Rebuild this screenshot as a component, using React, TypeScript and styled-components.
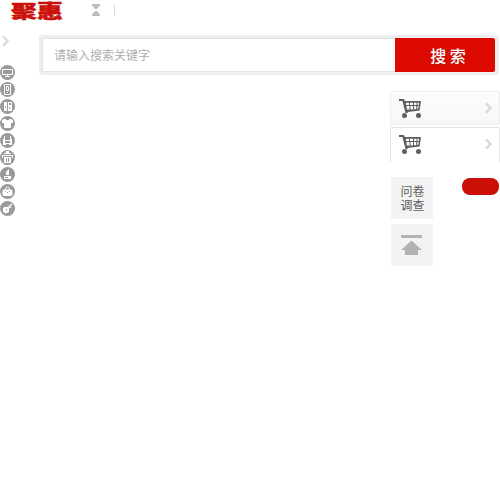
import React from "react";
import styled, { createGlobalStyle } from "styled-components";

const Global = createGlobalStyle`
  * { box-sizing: border-box; }
  body { margin: 0; background: #fff; overflow: hidden; font-family: "Liberation Sans", "Noto Sans CJK SC", sans-serif; }
  svg { display: block; flex: none; }
`;

const Page = styled.div`
  width: 500px;
  height: 500px;
  overflow: hidden;
`;
const Header = styled.header`
  display: flex;
  align-items: flex-start;
  height: 35px;
  padding-left: 11px;
`;
const Logo = styled.div`
  width: 81px;
  height: 20px;
  font: 900 26px/20px "Noto Sans CJK SC", sans-serif;
  color: #cb110a;
  white-space: nowrap;
  -webkit-text-stroke: 0.6px #cb110a;
  transform: scaleY(0.72);
  transform-origin: 0 45%;
`;
const Divider = styled.span`
  width: 1px;
  height: 12px;
  margin: 4px 0 0 13px;
  background: #ddd;
`;
const Body = styled.div`
  display: flex;
`;
const Rail = styled.nav`
  display: flex;
  flex-direction: column;
  width: 39px;
`;
const RailArrow = styled.div`
  height: 30px;
  padding-left: 2px;
`;
const IconList = styled.div`
  display: flex;
  flex-direction: column;
  gap: 2px;
`;
const Main = styled.main`
  display: flex;
  flex-direction: column;
  width: 461px;
`;
const Search = styled.form`
  display: flex;
  width: 460px;
  height: 40px;
  padding: 3px 4px 3px 3px;
  background: #eee;
  border-radius: 3px;
`;
const Field = styled.input`
  width: 353px;
  height: 34px;
  padding: 0 0 2px 11px;
  border: 1px solid #e2e2e2;
  border-right: 0;
  border-radius: 0;
  outline: 0;
  background: #fff;
  font: 12px "Noto Sans CJK SC", sans-serif;
  &::placeholder { color: #aeaeae; opacity: 1; }
`;
const Submit = styled.button`
  width: 100px;
  height: 34px;
  padding: 0 0 0 6px;
  border: 0;
  border-radius: 0 2px 2px 0;
  background: #dc0a01;
  color: #fff;
  font: 500 16px/34px "Noto Sans CJK SC", sans-serif;
  text-shadow: 1px 1px 1px #b8100a;
`;
const Side = styled.aside`
  width: 110px;
  margin: 16px 0 0 351px;
`;
const CartCard = styled.div<{ $open?: boolean }>`
  display: flex;
  justify-content: space-between;
  height: ${(p) => (p.$open ? 35 : 34)}px;
  margin-bottom: ${(p) => (p.$open ? 15 : 2)}px;
  padding: 6px 7px 0 8px;
  border: 1px solid ${(p) => (p.$open ? "#e3e3e3" : "#eee")};
  border-bottom-width: ${(p) => (p.$open ? 0 : 1)}px;
  border-radius: ${(p) => (p.$open ? "2px 2px 0 0" : "2px")};
  background: ${(p) => (p.$open ? "#fff" : "linear-gradient(#fcfcfc, #f7f7f7)")};
`;
const ArrowSlot = styled.span`
  padding-top: 4px;
`;
const Tools = styled.div`
  display: flex;
  justify-content: space-between;
  padding: 0 1px;
`;
const Tiles = styled.div`
  display: grid;
  gap: 5px;
`;
const Tile = styled.a`
  display: grid;
  place-items: center;
  align-content: center;
  width: 42px;
  height: 42px;
  background: #f3f3f3;
  color: #5c5c5c;
  font: 12px/14px "Noto Sans CJK SC", sans-serif;
`;
const TileLine = styled.span`
  padding-left: 1px;
`;
const Pill = styled.span`
  width: 37px;
  height: 17px;
  margin-top: 1px;
  border-radius: 8px;
  background: #cb0f08;
`;

const Chevron = ({ color = "#dcdcdc" }: { color?: string }) => (
  <svg width="7" height="12" viewBox="0 0 7 12">
    <path d="M1 1.2L5.5 6 1 10.8" fill="none" stroke={color} strokeWidth="2.4" />
  </svg>
);

const Cart = () => (
  <svg width="23" height="20" viewBox="0 0 23 20" fill="#5f5f5f">
    <path
      fillRule="evenodd"
      d="M0 1h5l.8 2H22l-1.4 9.5L8.6 14l.3 1H6.5L3.4 3H0zM7 4.8V7h3V4.8zM11 4.8V7h3V4.8zM15 4.8V7h2.5V4.8zM18.5 4.8V7h1.3l.3-2.2zM7.5 8l.4 3.5h2.6V8zM11.5 8v3.5H14V8zM15 8v3.2h2.2V8zM18.3 8v3l1-.2.4-2.8z"
    />
    <circle cx="5.5" cy="17.5" r="2.5" />
    <circle cx="19.5" cy="17.5" r="2.5" />
  </svg>
);

const line = { fill: "none", stroke: "#fff", strokeWidth: 1 };
const glyphs: React.ReactNode[] = [
  <><path {...line} d="M2.5 4.5h10v5h-10z" /><path fill="#fff" d="M7 10h1v1h2v1H5v-1h2z" /></>,
  <><path {...line} d="M4.5 2.5h6v10h-6z" /><path {...line} d="M6.5 4.5h2v4h-2z" /><path {...line} d="M7 10.5h1" /></>,
  <path fill="#fff" fillRule="evenodd" d="M4 3h3v9H4zM8 3h4v9H8zM5 7h1v2H5zM9 4h2v2H9zM9 8h1v2H9z" />,
  <path fill="#fff" d="M4 3h2v1h3V3h2l2 1v3h-2v5H4V7H2V4z" />,
  <path fill="#fff" fillRule="evenodd" d="M4 3h1v4h5V3h1v3h1v6H9v-1H6v1H3V6h1zM5 8v2h5V8z" />,
  <><path fill="#fff" d="M6 1h3v2h2v1H4V3h2zM2 5h11v3h-1V6H3v2H2zM4 7h7v6H4z" /><path fill="#9b9999" d="M6 8h1v4H6zM8 8h1v4H8z" /></>,
  <path fill="#fff" fillRule="evenodd" d="M6 8V5l3-3v6zM4 9h7v3H4zM5 10v1h3v-1z" />,
  <><path {...line} d="M5.5 6V4.8q0-1.6 2-1.6t2 1.6V6" /><path fill="#fff" d="M2.5 7q0-1.5 2-1.5h6q2 0 2 1.5v3q0 2-2 2h-6q-2 0-2-2z" /><path stroke="#9b9999" d="M5 7.5h1M9 7.5h1M7 8.5h1" /></>,
  <><circle cx="6" cy="9" r="3.2" fill="#fff" /><path stroke="#fff" strokeWidth="1.2" d="M7 8l5-5M9 4.5L11 7" /><path stroke="#9b9999" strokeWidth="1" d="M6 8.5h1" /></>,
];

export default function App() {
  return (
    <Page>
      <Global />
      <Header>
        <Logo>聚惠</Logo>
        <svg width="9" height="20" viewBox="0 0 9 20">
          <path d="M0 4h8v1.5L4.8 9H3.2L0 5.5zM0 16h8v-1.5L4.8 11H3.2L0 14.5z" fill="#bcbcbc" />
        </svg>
        <Divider />
      </Header>
      <Body>
        <Rail>
          <RailArrow><Chevron /></RailArrow>
          <IconList>
            {glyphs.map((glyph, i) => (
              <svg key={i} width="15" height="15" viewBox="0 0 15 15">
                <circle cx="7.5" cy="7.5" r="7.5" fill="#9b9999" />
                {glyph}
              </svg>
            ))}
          </IconList>
        </Rail>
        <Main>
          <Search>
            <Field placeholder="请输入搜索关键字" />
            <Submit type="button">搜 索</Submit>
          </Search>
          <Side>
            <CartCard><Cart /><ArrowSlot><Chevron color="#d9d9d9" /></ArrowSlot></CartCard>
            <CartCard $open><Cart /><ArrowSlot><Chevron color="#d9d9d9" /></ArrowSlot></CartCard>
            <Tools>
              <Tiles>
                <Tile><TileLine>问卷</TileLine><TileLine>调查</TileLine></Tile>
                <Tile>
                  <svg width="22" height="20" viewBox="0 0 22 20" fill="#b3b3b3">
                    <path d="M0 0h21v3H0zM10.5 5.5L21 15h-4v5H4v-5H0z" />
                  </svg>
                </Tile>
              </Tiles>
              <Pill />
            </Tools>
          </Side>
        </Main>
      </Body>
    </Page>
  );
}
